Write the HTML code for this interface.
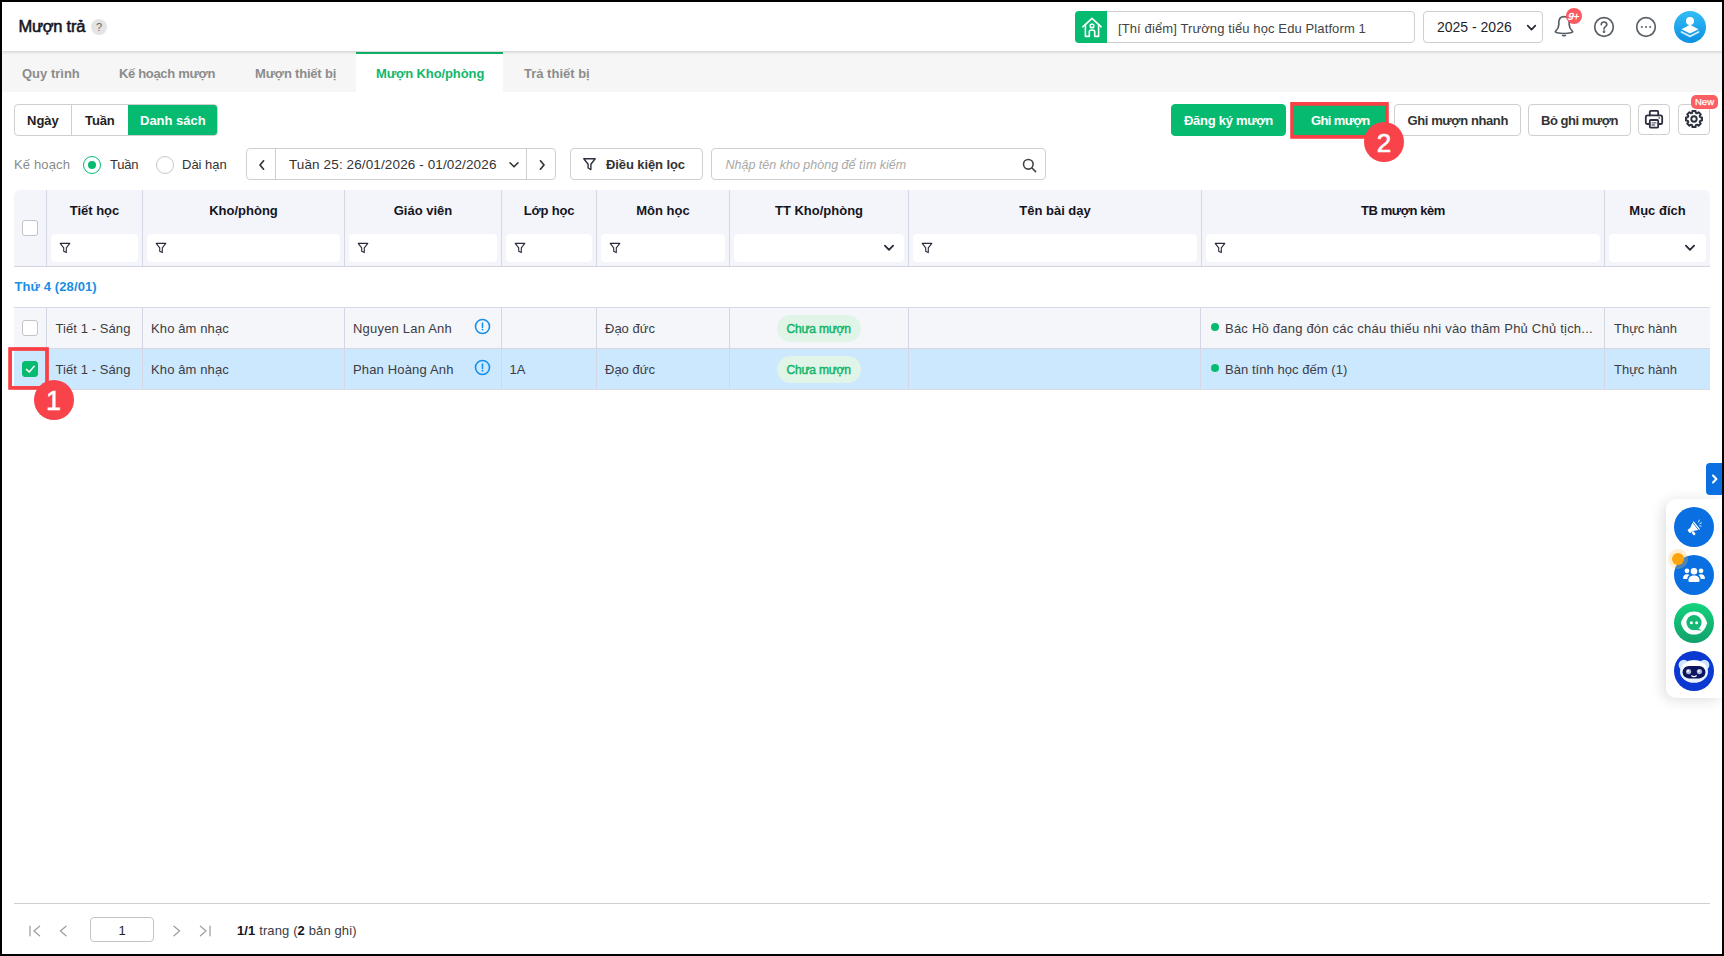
<!DOCTYPE html>
<html lang="vi">
<head>
<meta charset="utf-8">
<title>Mượn trả</title>
<style>
*{box-sizing:border-box;margin:0;padding:0}
html,body{width:1724px;height:956px;overflow:hidden;background:#fff}
body{position:relative;font-family:"Liberation Sans",sans-serif;font-size:13px;color:#3a3a3a}
.abs{position:absolute}
.t{position:absolute;white-space:nowrap;line-height:20px}
.frame{position:absolute;left:0;top:0;width:1724px;height:956px;border:2px solid #000;z-index:100;pointer-events:none}
.hdr{position:absolute;left:2px;top:2px;width:1720px;height:49px;background:#fff;box-shadow:0 1px 3px rgba(0,0,0,.18);z-index:5}
.qm{position:absolute;left:91px;top:19px;width:16px;height:16px;border-radius:50%;background:#e4e4e4;color:#666;font-size:11px;line-height:17px;text-align:center;z-index:6}
.school{position:absolute;left:1075px;top:11px;width:340px;height:32px;border:1px solid #cfcfcf;border-radius:4px;background:#fff;overflow:hidden;z-index:6}
.ic{position:absolute;left:1075px;top:11px;width:32px;height:32px;background:#06bb70;border-radius:4px 0 0 4px;z-index:7}
.year{position:absolute;left:1423px;top:11px;width:120px;height:32px;border:1px solid #cfcfcf;border-radius:4px;background:#fff;z-index:6}
.tabs{position:absolute;left:2px;top:51px;width:1720px;height:41px;background:#f6f6f6}
.tabon{position:absolute;left:356px;top:52px;width:147px;height:40px;background:#fff;border-top:2px solid #11b76b}
.tab{font-size:13px;font-weight:700;color:#8c8c8c}
.seg{position:absolute;left:14px;top:104px;height:32px;width:204px;border:1px solid #cfcfcf;border-radius:4px;overflow:hidden;background:#fff}
.btn{position:absolute;top:104px;height:32px;border:1px solid #cfcfcf;border-radius:4px;background:#fff}
.btn.g{background:#06bb70;border-color:#06bb70}
.b{font-weight:700}
.radio{position:absolute;top:156px;width:18px;height:18px;border-radius:50%;border:1px solid #c8c8c8;background:#fff}
.radio.on{border:1.5px solid #06bb70}
.radio.on:after{content:"";position:absolute;left:3.5px;top:3.5px;width:8px;height:8px;border-radius:50%;background:#06bb70}
.box{position:absolute;top:148px;height:32px;border:1px solid #cfcfcf;border-radius:4px;background:#fff}
.fi{fill:none;stroke:#2b2b3a;stroke-width:1.1;stroke-linejoin:round;stroke-linecap:round}
.th{position:absolute;top:190px;height:76px;background:#f4f5fa}
.hl{font-weight:700;color:#14141e}
.vd{position:absolute;width:1px;background:#d6d7e4}
.fin{position:absolute;top:234px;height:28px;background:#fff;border-radius:4px}
.row{position:absolute;left:14px;width:1696px;height:41px}
.c{color:#3c3c44}
.cb{position:absolute;left:22px;width:16px;height:16px;border:1px solid #c4c4c8;border-radius:3px;background:#fff}
.pill{position:absolute;left:777px;width:84px;height:27px;border-radius:14px;background:#e1f4e8}
.dot{position:absolute;left:1211px;width:8px;height:8px;border-radius:50%;background:#06bb70}
</style>
</head>
<body>
<div class="frame"></div>
<div class="hdr"></div>
<div class="t " style="left:18.5px;top:16.3px;letter-spacing:-0.25px;font-size:16.5px;color:#15151f;z-index:6;-webkit-text-stroke:0.55px #15151f">Mượn trả</div>
<div class="qm">?</div>
<div class="ic"><svg width="32" height="32" viewBox="-1 0 32 32" fill="none" stroke="#fff" stroke-width="1.6" stroke-linejoin="round" stroke-linecap="round">
  <path d="M6.800 15.800 L16 7.300 L25.200 15.800"/><path d="M9.400 13.800 V25.400 H13.300 V20.600 C13.300 18.400 18.700 18.400 18.700 20.600 V25.400 H22.600 V13.800"/><rect x="14.300" y="13.200" width="3.400" height="3.400" rx="0.900"/></svg></div>
<div class="school">
  <div class="t" style="left:42px;top:7px;font-size:13px;color:#444;letter-spacing:0.11px">[Thí điểm] Trường tiểu học Edu Platform 1</div>
</div>
<div class="year"><div class="t" style="left:13px;top:5px;font-size:14px;color:#1f1f2a">2025 - 2026</div>
<svg class="abs" style="left:101.5px;top:11.5px" width="11" height="8" viewBox="0 0 11 8" fill="none" stroke="#2a2a36" stroke-width="1.7" stroke-linecap="round" stroke-linejoin="round"><path d="M1.700 1.700 L5.500 5.700 L9.300 1.700"/></svg></div>
<svg class="abs" style="left:1552px;top:13px;z-index:6" width="24" height="26" viewBox="0 0 24 26" fill="none" stroke="#596068" stroke-width="1.7" stroke-linecap="round" stroke-linejoin="round">
  <path d="M12 3.600 C8.600 3.600 6.800 6.200 6.800 9.400 V11.800 C6.800 14.600 5.600 16.200 3.800 17.800 C3.100 18.500 3.300 19.300 4.300 19.500 C8.200 20.500 15.800 20.500 19.700 19.500 C20.700 19.300 20.900 18.500 20.200 17.800 C18.400 16.200 17.200 14.600 17.200 11.800 V9.400 C17.200 6.200 15.400 3.600 12 3.600 Z"/>
  <path d="M10.300 22.300 Q12 23.700 13.700 22.300 Z" fill="#596068" stroke-width="1.200"/></svg>
<div class="abs" style="left:1566px;top:8px;width:16px;height:16px;border-radius:50%;background:#fb5a60;z-index:7;color:#fff;font-size:10.5px;font-weight:700;font-style:italic;line-height:16px;text-align:center;letter-spacing:-0.6px;text-indent:-1px"><span style="display:inline-block;transform:skewX(-8deg)">9+</span></div>
<svg class="abs" style="left:1593px;top:16px;z-index:6" width="22" height="22" viewBox="0 0 22 22" fill="none" stroke="#596068" stroke-width="1.7" stroke-linecap="round" stroke-linejoin="round">
  <circle cx="11" cy="11" r="9.3"/><path d="M8.3 8.6 C8.3 6.9 9.5 6 11 6 C12.6 6 13.8 7 13.8 8.5 C13.8 10.6 11 10.7 11 12.9"/><circle cx="11" cy="15.700" r="0.500" fill="#596068"/></svg>
<svg class="abs" style="left:1635px;top:16px;z-index:6" width="22" height="22" viewBox="0 0 22 22" fill="none" stroke="#596068" stroke-width="1.7">
  <circle cx="11" cy="11" r="9.3"/><circle cx="6.8" cy="11" r="1" fill="#596068" stroke="none"/><circle cx="11" cy="11" r="1" fill="#596068" stroke="none"/><circle cx="15.2" cy="11" r="1" fill="#596068" stroke="none"/></svg>
<svg class="abs" style="left:1674px;top:11px;z-index:6" width="32" height="32" viewBox="0 0 32 32">
  <defs><linearGradient id="av" x1="0" y1="0" x2="0" y2="1"><stop offset="0" stop-color="#35bdf6"/><stop offset="1" stop-color="#0b8fe3"/></linearGradient></defs>
  <circle cx="16" cy="16" r="16" fill="url(#av)"/><circle cx="16" cy="10" r="4" fill="#fff"/>
  <path d="M7.5 18.2 L16 13.8 L24.5 18.2 L16 22.6 Z" fill="#fff"/>
  <path d="M7.5 21 L16 25.400 L24.500 21" fill="none" stroke="#fff" stroke-opacity=".8" stroke-width="1.800" stroke-linejoin="round" stroke-linecap="round"/></svg>
<div class="tabs"></div><div class="tabon"></div>
<div class="t tab" style="left:22px;top:64px;">Quy trình</div>
<div class="t tab" style="left:119px;top:64px;letter-spacing:-0.33px;">Kế hoạch mượn</div>
<div class="t tab" style="left:255px;top:64px;letter-spacing:-0.2px;">Mượn thiết bị</div>
<div class="t tab" style="left:376px;top:64px;letter-spacing:-0.1px;color:#11b76b">Mượn Kho/phòng</div>
<div class="t tab" style="left:524px;top:64px;">Trả thiết bị</div>
<div class="seg"><div class="abs" style="left:56px;top:-1px;width:1px;height:32px;background:#cfcfcf"></div>
<div class="abs" style="left:113px;top:-1px;width:91px;height:32px;background:#06bb70"></div></div>
<div class="t b" style="left:27px;top:111px;color:#222">Ngày</div>
<div class="t b" style="left:85px;top:111px;letter-spacing:-0.1px;color:#222">Tuần</div>
<div class="t b" style="left:140px;top:111px;color:#fff">Danh sách</div>
<div class="btn g" style="left:1171px;width:115px"></div>
<div class="t b" style="left:1184px;top:111px;letter-spacing:-0.28px;color:#fff">Đăng ký mượn</div>
<div class="btn g" style="left:1293px;width:93px;border-radius:0"></div>
<div class="t b" style="left:1311px;top:111px;letter-spacing:-0.62px;color:#fff">Ghi mượn</div>
<div class="btn" style="left:1394px;width:127px"></div>
<div class="t b" style="left:1407.5px;top:111px;letter-spacing:-0.4px;color:#333">Ghi mượn nhanh</div>
<div class="btn" style="left:1528px;width:103px"></div>
<div class="t b" style="left:1541px;top:111px;letter-spacing:-0.47px;color:#333">Bỏ ghi mượn</div>
<div class="btn" style="left:1638px;width:32px;height:31px"></div><div class="btn" style="left:1678px;width:32px;height:31px"></div>
<svg class="abs" style="left:1643px;top:107.500px" width="22" height="22" viewBox="0 0 22 22" fill="none" stroke="#2c2f3e" stroke-width="1.800" stroke-linejoin="round" stroke-linecap="round">
  <path d="M6.800 7.400 V3.800 C6.800 3.200 7.200 2.800 7.800 2.800 H14.200 C14.800 2.800 15.200 3.200 15.200 3.800 V7.400"/>
  <path d="M6.600 16 H4.400 C3.500 16 2.800 15.300 2.800 14.400 V9.200 C2.800 8.200 3.600 7.400 4.600 7.400 H17.400 C18.400 7.400 19.200 8.200 19.200 9.200 V14.400 C19.200 15.300 18.500 16 17.600 16 H15.400"/>
  <rect x="6.800" y="12" width="8.400" height="7.600" rx="0.900"/><path d="M9 14.800 H13 M9 17 H11.600" stroke-width="1.300" stroke="#6a6d7c"/><path d="M16 9.900 H16.600" stroke-width="1.100"/></svg>
<svg class="abs" style="left:1684px;top:109px" width="20" height="20" viewBox="0 0 20 20" fill="none" stroke="#2c2f3e" stroke-width="1.9" stroke-linejoin="round" stroke-linecap="round">
  <path d="M8.21 3.85 L8.40 1.96 L11.60 1.96 L11.79 3.85 L13.08 4.39 L14.56 3.18 L16.82 5.44 L15.61 6.92 L16.15 8.21 L18.04 8.40 L18.04 11.60 L16.15 11.79 L15.61 13.08 L16.82 14.56 L14.56 16.82 L13.08 15.61 L11.79 16.15 L11.60 18.04 L8.40 18.04 L8.21 16.15 L6.92 15.61 L5.44 16.82 L3.18 14.56 L4.39 13.08 L3.85 11.79 L1.96 11.60 L1.96 8.40 L3.85 8.21 L4.39 6.92 L3.18 5.44 L5.44 3.18 L6.92 4.39 Z"/>
  <circle cx="10" cy="10" r="2.700"/></svg>
<div class="abs" style="left:1691px;top:95px;width:27px;height:14px;border-radius:5px;background:#fc5f63;color:#fff;font-size:9.5px;line-height:14px;text-align:center;z-index:8;-webkit-text-stroke:0.25px #fff">New</div>
<div class="t " style="left:14px;top:155px;letter-spacing:0.15px;color:#8a8a8a">Kế hoạch</div>
<div class="radio on" style="left:83px"></div>
<div class="t " style="left:110px;top:155px;letter-spacing:-0.2px;color:#333">Tuần</div>
<div class="radio" style="left:156px"></div>
<div class="t " style="left:182px;top:155px;color:#333">Dài hạn</div>
<div class="box" style="left:246px;width:310px">
  <div class="abs" style="left:28px;top:-1px;width:1px;height:32px;background:#cfcfcf"></div>
  <div class="abs" style="left:279px;top:-1px;width:1px;height:32px;background:#cfcfcf"></div>
  <svg class="abs" style="left:10.5px;top:9.5px" width="8" height="12" viewBox="0 0 8 12" fill="none" stroke="#333" stroke-width="1.700" stroke-linecap="round" stroke-linejoin="round"><path d="M5.6 1.800 L2 6 L5.6 10.200"/></svg>
  <svg class="abs" style="left:261px;top:12px" width="12" height="8" viewBox="0 0 12 8" fill="none" stroke="#333" stroke-width="1.600" stroke-linecap="round" stroke-linejoin="round"><path d="M2 1.800 L6 5.800 L10 1.800"/></svg>
  <svg class="abs" style="left:291px;top:9.5px" width="8" height="12" viewBox="0 0 8 12" fill="none" stroke="#333" stroke-width="1.700" stroke-linecap="round" stroke-linejoin="round"><path d="M2.400 1.800 L6 6 L2.400 10.200"/></svg>
</div>
<div class="t " style="left:289px;top:155px;letter-spacing:0.12px;font-size:13.5px;color:#333">Tuần 25: 26/01/2026 - 01/02/2026</div>
<div class="box" style="left:570px;width:133px">
  <svg class="abs" style="left:11.400px;top:8px" width="15" height="15" viewBox="0 0 15 15"><path class="fi" style="stroke-width:1.400;stroke:#2c2f3e" d="M1.8 1.8 H13.2 L8.9 7.2 V12.6 L6.1 11 V7.2 Z"/></svg></div>
<div class="t b" style="left:606px;top:154.5px;letter-spacing:-0.1px;color:#333">Điều kiện lọc</div>
<div class="box" style="left:711px;width:335px">
  <svg class="abs" style="left:310px;top:9px" width="15" height="15" viewBox="0 0 15 15" fill="none" stroke="#444" stroke-width="1.6" stroke-linecap="round"><circle cx="6.3" cy="6.3" r="4.8"/><path d="M10 10 L13.6 13.6"/></svg></div>
<div class="t " style="left:725.5px;top:155px;font-size:12.5px;font-style:italic;color:#a8a8a8">Nhập tên kho phòng để tìm kiếm</div>
<div class="th" style="left:14px;width:1696px;border-radius:6px 6px 0 0"></div>
<div class="abs" style="left:14px;top:266px;width:1696px;height:1px;background:#d3d5e2"></div>
<div class="vd" style="left:46px;top:190px;height:76px"></div>
<div class="vd" style="left:142px;top:190px;height:76px"></div>
<div class="vd" style="left:344px;top:190px;height:76px"></div>
<div class="vd" style="left:501px;top:190px;height:76px"></div>
<div class="vd" style="left:596px;top:190px;height:76px"></div>
<div class="vd" style="left:729px;top:190px;height:76px"></div>
<div class="vd" style="left:908px;top:190px;height:76px"></div>
<div class="vd" style="left:1201px;top:190px;height:76px"></div>
<div class="vd" style="left:1604px;top:190px;height:76px"></div>
<div class="cb" style="top:220px"></div>
<div class="t hl" style="left:47px;width:95px;top:201px;text-align:center;letter-spacing:0px">Tiết học</div>
<div class="fin" style="left:51px;width:87px"></div>
<svg class="abs" style="left:59px;top:242px" width="12" height="12" viewBox="0 0 12 12"><path class="fi" d="M1.2 1.4 H10.8 L7.3 5.8 V10.6 L4.7 9.2 V5.8 Z"/></svg>
<div class="t hl" style="left:143px;width:201px;top:201px;text-align:center;letter-spacing:0px">Kho/phòng</div>
<div class="fin" style="left:147px;width:193px"></div>
<svg class="abs" style="left:155px;top:242px" width="12" height="12" viewBox="0 0 12 12"><path class="fi" d="M1.2 1.4 H10.8 L7.3 5.8 V10.6 L4.7 9.2 V5.8 Z"/></svg>
<div class="t hl" style="left:345px;width:156px;top:201px;text-align:center;letter-spacing:0px">Giáo viên</div>
<div class="fin" style="left:349px;width:148px"></div>
<svg class="abs" style="left:357px;top:242px" width="12" height="12" viewBox="0 0 12 12"><path class="fi" d="M1.2 1.4 H10.8 L7.3 5.8 V10.6 L4.7 9.2 V5.8 Z"/></svg>
<div class="t hl" style="left:502px;width:94px;top:201px;text-align:center;letter-spacing:-0.2px">Lớp học</div>
<div class="fin" style="left:506px;width:86px"></div>
<svg class="abs" style="left:514px;top:242px" width="12" height="12" viewBox="0 0 12 12"><path class="fi" d="M1.2 1.4 H10.8 L7.3 5.8 V10.6 L4.7 9.2 V5.8 Z"/></svg>
<div class="t hl" style="left:597px;width:132px;top:201px;text-align:center;letter-spacing:0px">Môn học</div>
<div class="fin" style="left:601px;width:124px"></div>
<svg class="abs" style="left:609px;top:242px" width="12" height="12" viewBox="0 0 12 12"><path class="fi" d="M1.2 1.4 H10.8 L7.3 5.8 V10.6 L4.7 9.2 V5.8 Z"/></svg>
<div class="t hl" style="left:730px;width:178px;top:201px;text-align:center;letter-spacing:0px">TT Kho/phòng</div>
<div class="fin" style="left:734px;width:170px"></div>
<svg class="abs" style="left:883.3px;top:244px" width="12" height="8" viewBox="0 0 12 8" fill="none" stroke="#2b2b3a" stroke-width="1.800" stroke-linecap="round" stroke-linejoin="round"><path d="M1.900 1.600 L6 5.900 L10.100 1.600"/></svg>
<div class="t hl" style="left:909px;width:292px;top:201px;text-align:center;letter-spacing:0px">Tên bài dạy</div>
<div class="fin" style="left:913px;width:284px"></div>
<svg class="abs" style="left:921px;top:242px" width="12" height="12" viewBox="0 0 12 12"><path class="fi" d="M1.2 1.4 H10.8 L7.3 5.8 V10.6 L4.7 9.2 V5.8 Z"/></svg>
<div class="t hl" style="left:1202px;width:402px;top:201px;text-align:center;letter-spacing:-0.45px">TB mượn kèm</div>
<div class="fin" style="left:1206px;width:394px"></div>
<svg class="abs" style="left:1214px;top:242px" width="12" height="12" viewBox="0 0 12 12"><path class="fi" d="M1.2 1.4 H10.8 L7.3 5.8 V10.6 L4.7 9.2 V5.8 Z"/></svg>
<div class="t hl" style="left:1605px;width:105px;top:201px;text-align:center;letter-spacing:0px">Mục đích</div>
<div class="fin" style="left:1609px;width:97px"></div>
<svg class="abs" style="left:1684px;top:244px" width="12" height="8" viewBox="0 0 12 8" fill="none" stroke="#2b2b3a" stroke-width="1.800" stroke-linecap="round" stroke-linejoin="round"><path d="M1.900 1.600 L6 5.900 L10.100 1.600"/></svg>
<div class="t b" style="left:14.5px;top:277px;letter-spacing:0.1px;color:#1b8de6">Thứ 4 (28/01)</div>
<div class="row" style="top:307px;background:#f5f6fa;border-top:1px solid #d6d7e4"></div>
<div class="vd" style="left:46px;top:307px;height:41px"></div>
<div class="vd" style="left:142px;top:307px;height:41px"></div>
<div class="vd" style="left:344px;top:307px;height:41px"></div>
<div class="vd" style="left:501px;top:307px;height:41px"></div>
<div class="vd" style="left:596px;top:307px;height:41px"></div>
<div class="vd" style="left:729px;top:307px;height:41px"></div>
<div class="vd" style="left:908px;top:307px;height:41px"></div>
<div class="vd" style="left:1200px;top:307px;height:41px"></div>
<div class="vd" style="left:1604px;top:307px;height:41px"></div>
<div class="cb" style="top:320px"></div>
<div class="t c" style="left:55.5px;top:319px;letter-spacing:0.08px;">Tiết 1 - Sáng</div>
<div class="t c" style="left:151px;top:319px;letter-spacing:0.12px;">Kho âm nhạc</div>
<div class="t c" style="left:353px;top:319px;letter-spacing:0.2px;">Nguyen Lan Anh</div>
<svg class="abs" style="left:474px;top:318px" width="17" height="17" viewBox="0 0 17 17"><circle cx="8.5" cy="8.5" r="7" fill="none" stroke="#128fee" stroke-width="1.6"/><path d="M8.5 5 V9.400" stroke="#128fee" stroke-width="1.5" stroke-linecap="round"/><circle cx="8.5" cy="11.700" r="0.900" fill="#128fee"/></svg>
<div class="t c" style="left:605px;top:319px;">Đạo đức</div>
<div class="pill" style="top:315px"></div>
<div class="t " style="left:786.5px;top:318.5px;letter-spacing:-0.2px;font-size:12px;color:#10b469;-webkit-text-stroke:0.45px #10b469">Chưa mượn</div>
<div class="dot" style="top:323px"></div>
<div class="t c" style="left:1225px;top:319px;letter-spacing:0.22px;">Bác Hồ đang đón các cháu thiếu nhi vào thăm Phủ Chủ tịch...</div>
<div class="t c" style="left:1614px;top:319px;">Thực hành</div>
<div class="row" style="top:348px;background:#cce8ff;border-top:1px solid #d6d7e4"></div>
<div class="vd" style="left:46px;top:348px;height:41px"></div>
<div class="vd" style="left:142px;top:348px;height:41px"></div>
<div class="vd" style="left:344px;top:348px;height:41px"></div>
<div class="vd" style="left:501px;top:348px;height:41px"></div>
<div class="vd" style="left:596px;top:348px;height:41px"></div>
<div class="vd" style="left:729px;top:348px;height:41px"></div>
<div class="vd" style="left:908px;top:348px;height:41px"></div>
<div class="vd" style="left:1200px;top:348px;height:41px"></div>
<div class="vd" style="left:1604px;top:348px;height:41px"></div>
<div class="cb" style="top:361px;background:#06bb70;border-color:#06bb70"><svg class="abs" style="left:0px;top:0px" width="14" height="14" viewBox="0 0 14 14" fill="none" stroke="#fff" stroke-width="1.5" stroke-linecap="round" stroke-linejoin="round"><path d="M3.4 7.4 L6.3 10 L11.2 4.3"/></svg></div>
<div class="t c" style="left:55.5px;top:360px;letter-spacing:0.08px;">Tiết 1 - Sáng</div>
<div class="t c" style="left:151px;top:360px;letter-spacing:0.12px;">Kho âm nhạc</div>
<div class="t c" style="left:353px;top:360px;letter-spacing:0.16px;">Phan Hoàng Anh</div>
<svg class="abs" style="left:474px;top:359px" width="17" height="17" viewBox="0 0 17 17"><circle cx="8.5" cy="8.5" r="7" fill="none" stroke="#128fee" stroke-width="1.6"/><path d="M8.5 5 V9.400" stroke="#128fee" stroke-width="1.5" stroke-linecap="round"/><circle cx="8.5" cy="11.700" r="0.900" fill="#128fee"/></svg>
<div class="t c" style="left:509.5px;top:360px;">1A</div>
<div class="t c" style="left:605px;top:360px;">Đạo đức</div>
<div class="pill" style="top:356px"></div>
<div class="t " style="left:786.5px;top:359.5px;letter-spacing:-0.2px;font-size:12px;color:#10b469;-webkit-text-stroke:0.45px #10b469">Chưa mượn</div>
<div class="dot" style="top:364px"></div>
<div class="t c" style="left:1225px;top:360px;letter-spacing:0.05px;">Bàn tính học đếm (1)</div>
<div class="t c" style="left:1614px;top:360px;">Thực hành</div>
<div class="abs" style="left:14px;top:389px;width:1696px;height:1px;background:#d9dae4"></div>
<svg class="abs" style="left:0;top:0;z-index:20" width="1724" height="956" viewBox="0 0 1724 956" fill="none" stroke="#fa4045" stroke-width="3.75">
<rect x="10.1" y="349" width="36.9" height="38.9"/>
<rect x="1292.1" y="103.9" width="94.8" height="33"/>
</svg>
<div class="abs" style="left:34px;top:380px;width:40px;height:40px;border-radius:50%;background:#f9434a;z-index:21;color:#fff;font-size:27px;line-height:42px;text-align:center;text-indent:-1px;-webkit-text-stroke:0.6px #fff">1</div>
<div class="abs" style="left:1364px;top:122px;width:40px;height:40px;border-radius:50%;background:#f9434a;z-index:21;color:#fff;font-size:26px;line-height:43.5px;text-align:center;-webkit-text-stroke:0.6px #fff">2</div>
<!-- SIDE PANEL -->
<div class="abs" style="left:1706px;top:463px;width:16px;height:32px;background:#0a6fe0;border-radius:4px 0 0 4px;z-index:30">
  <svg class="abs" style="left:4px;top:10px" width="9" height="12" viewBox="0 0 9 12" fill="none" stroke="#fff" stroke-width="2.1" stroke-linecap="round" stroke-linejoin="round"><path d="M3 2.600 L6.400 6 L3 9.400"/></svg>
</div>
<div class="abs" style="left:1666px;top:499px;width:56px;height:199px;background:#fff;border-radius:10px 0 0 10px;box-shadow:-3px 2px 14px rgba(0,0,0,.13);z-index:29"></div>
<!-- 1 megaphone -->
<svg class="abs" style="left:1674px;top:507px;z-index:31" width="40" height="40" viewBox="0 0 40 40">
  <circle cx="20" cy="20" r="20" fill="#0a6fe0"/>
  <g transform="translate(20 20.500) scale(0.680) translate(-20 -20)">
  <g transform="rotate(-38 20 20)" fill="#fff">
    <path d="M11.200 17 H15.500 L22.500 13.200 V26.800 L15.500 23 H11.200 C10.500 23 10 22.500 10 21.800 V18.200 C10 17.500 10.500 17 11.200 17 Z"/>
    <rect x="12.400" y="23.400" width="3.800" height="6" rx="1.700"/>
    <rect x="23.600" y="12.400" width="1.800" height="15.200" rx="0.900"/>
  </g>
  <path d="M26.600 11.800 L27.800 9 M28.600 14.200 L31.200 13 M28.200 17.400 L30.600 18" stroke="#fff" stroke-width="1.200" stroke-linecap="round"/>
  </g>
</svg>
<!-- 2 group -->
<svg class="abs" style="left:1674px;top:555px;z-index:31" width="40" height="40" viewBox="0 0 40 40">
  <circle cx="20" cy="20" r="20" fill="#0a6fe0"/>
  <g fill="#fff" transform="translate(20 20.600) scale(0.880) translate(-20 -20.600)">
    <circle cx="12" cy="15.200" r="2.700"/><circle cx="28" cy="15.200" r="2.700"/>
    <path d="M7.600 23.600 C7.600 20.600 9.400 19 12 19 C13.200 19 14.200 19.400 14.900 20 C13.300 21 12.400 22.600 12.300 24.600 H8.600 C8 24.600 7.600 24.200 7.600 23.600 Z"/>
    <path d="M32.400 23.600 C32.400 20.600 30.600 19 28 19 C26.800 19 25.800 19.400 25.100 20 C26.700 21 27.600 22.600 27.700 24.600 H31.400 C32 24.600 32.400 24.200 32.400 23.600 Z"/>
    <circle cx="20" cy="15.600" r="3.700"/>
    <path d="M13.600 26.200 C13.600 22.600 16.200 20.400 20 20.400 C23.800 20.400 26.400 22.600 26.400 26.200 C26.400 27.200 25.800 27.800 24.800 27.800 H15.200 C14.200 27.800 13.600 27.200 13.600 26.200 Z"/>
  </g>
</svg>
<div class="abs" style="left:1668px;top:549px;width:20px;height:20px;border-radius:50%;background:rgba(255,190,80,.28);z-index:32"></div>
<div class="abs" style="left:1672px;top:553px;width:12px;height:12px;border-radius:50%;background:#ffa40a;z-index:33"></div>
<!-- 3 chat -->
<svg class="abs" style="left:1674px;top:603px;z-index:31" width="40" height="40" viewBox="0 0 40 40">
  <defs><linearGradient id="gg" x1="0" y1="0" x2="0" y2="1"><stop offset="0" stop-color="#12d37c"/><stop offset="1" stop-color="#12a06c"/></linearGradient></defs>
  <circle cx="20" cy="20" r="20" fill="url(#gg)"/>
  <path d="M6.800 20 C9.500 11.500 14 8.400 20 8.400 C26 8.400 30.500 11.500 33.200 20 C30.500 28.500 26 31.600 20 31.600 C14 31.600 9.500 28.500 6.800 20 Z" fill="#fff"/>
  <circle cx="20" cy="19.600" r="7.600" fill="#14b874"/>
  <path d="M23.500 25 L28 27.800 L22 27 Z" fill="#14b874"/>
  <circle cx="17.400" cy="19.800" r="1.500" fill="#fff"/><circle cx="22.600" cy="19.800" r="1.500" fill="#fff"/>
</svg>
<!-- 4 robot -->
<svg class="abs" style="left:1674px;top:651px;z-index:31" width="40" height="40" viewBox="0 0 40 40">
  <circle cx="20" cy="20" r="20" fill="#0a38d0"/>
  <circle cx="9.800" cy="14" r="5.200" fill="#cfe4ff"/><circle cx="30.200" cy="14" r="5.200" fill="#cfe4ff"/>
  <ellipse cx="20" cy="20.400" rx="14" ry="11.400" fill="#eaf3ff"/>
  <ellipse cx="20" cy="17" rx="12" ry="7" fill="#fff"/>
  <rect x="8.600" y="15" width="22.800" height="12.400" rx="6.200" fill="#0b1560"/>
  <circle cx="14.600" cy="20.600" r="2.600" fill="#aebbd8"/><circle cx="25.400" cy="20.600" r="2.600" fill="#aebbd8"/>
  <circle cx="14" cy="20" r="1" fill="#fff"/><circle cx="24.800" cy="20" r="1" fill="#fff"/>
  <path d="M17.600 24.800 Q20 26.400 22.400 24.800" stroke="#fff" stroke-width="1.200" fill="none" stroke-linecap="round"/>
</svg>

<div class="abs" style="left:14px;top:903px;width:1696px;height:1px;background:#cfcfcf"></div>
<svg class="abs" style="left:28px;top:924px" width="14" height="14" viewBox="0 0 14 14" fill="none" stroke="#a0a0a0" stroke-width="1.3" stroke-linecap="round" stroke-linejoin="round"><path d="M2 2.200 V11.800 M11.600 2.200 L6 7 L11.600 11.800"/></svg>
<svg class="abs" style="left:58px;top:924px" width="10" height="14" viewBox="0 0 10 14" fill="none" stroke="#a0a0a0" stroke-width="1.300" stroke-linecap="round" stroke-linejoin="round"><path d="M8 2.200 L2.400 7 L8 11.800"/></svg>
<div class="abs" style="left:90px;top:917px;width:64px;height:25px;border:1px solid #c4c4c4;border-radius:4px;background:#fff;font-size:13px;color:#222;line-height:25px;text-align:center">1</div>
<svg class="abs" style="left:172px;top:924px" width="10" height="14" viewBox="0 0 10 14" fill="none" stroke="#a0a0a0" stroke-width="1.300" stroke-linecap="round" stroke-linejoin="round"><path d="M2 2.200 L7.600 7 L2 11.800"/></svg>
<svg class="abs" style="left:198px;top:924px" width="14" height="14" viewBox="0 0 14 14" fill="none" stroke="#a0a0a0" stroke-width="1.300" stroke-linecap="round" stroke-linejoin="round"><path d="M12 2.200 V11.800 M2.400 2.200 L8 7 L2.400 11.800"/></svg>
<div class="t" style="left:237px;top:921px;color:#3c3c44;letter-spacing:0.12px"><b style="color:#14141e">1/1</b> trang (<b style="color:#14141e">2</b> bản ghi)</div>
</body>
</html>
